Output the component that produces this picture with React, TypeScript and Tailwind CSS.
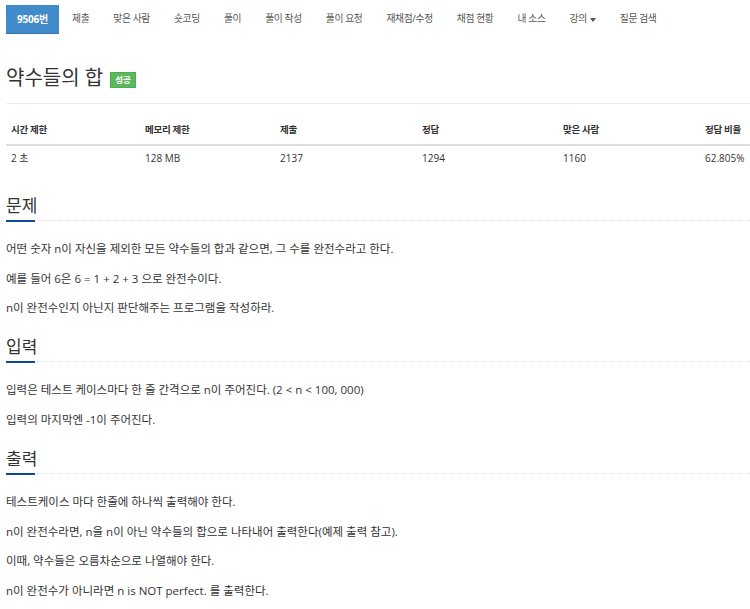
import React from "react";

const navItems = [
  "제출",
  "맞은 사람",
  "숏코딩",
  "풀이",
  "풀이 작성",
  "풀이 요청",
  "재채점/수정",
  "채점 현황",
  "내 소스",
];

function Section({ title, lines }: { title: string; lines: string[] }) {
  return (
    <section className="mt-[18px]">
      <div className="flex items-end">
        <div className="flex flex-col">
          <h2 className="text-[17px] leading-[22px] text-[#333] pb-[3px] whitespace-nowrap">{title}</h2>
          <div className="h-[2px] w-[29px] bg-[#0b4a9a]" />
        </div>
        <div className="flex-1 border-b border-dotted border-[#e3e3e3] mb-[1px]" />
      </div>
      <div className="mt-[17px]">
        {lines.map((l, i) => (
          <p key={i} className="text-[11.5px] leading-[20px] mb-[9.7px] text-[#333] whitespace-nowrap">
            {l}
          </p>
        ))}
      </div>
    </section>
  );
}

export default function App() {
  const cols = ["시간 제한", "메모리 제한", "제출", "정답", "맞은 사람", "정답 비율"];
  const vals = ["2 초", "128 MB", "2137", "1294", "1160", "62.805%"];
  return (
    <div
      className="w-[750px] h-[609px] overflow-hidden bg-white text-[#333]"
      style={{ fontFamily: '"Open Sans", "Noto Sans CJK KR", sans-serif' }}
    >
      <div className="pl-[6px]">
        <nav className="flex items-center gap-[2px] pt-[5px]">
          <div className="h-[29px] px-[11px] flex items-center bg-[#428bca] border-b border-[#3576b3] text-white font-bold text-[10px] tracking-[-0.2px]">
            9506번
          </div>
          {navItems.map((n) => (
            <div key={n} className="h-[29px] px-[11px] flex items-center text-[#555] text-[9.75px] tracking-[-0.35px] whitespace-nowrap">
              {n}
            </div>
          ))}
          <div className="h-[29px] px-[11px] flex items-center text-[#555] text-[9.75px] tracking-[-0.35px] whitespace-nowrap">
            강의
            <span className="ml-[3px] inline-block w-0 h-0 border-l-[3px] border-r-[3px] border-t-[4px] border-l-transparent border-r-transparent border-t-[#555]" />
          </div>
          <div className="h-[29px] px-[11px] flex items-center text-[#555] text-[9.75px] tracking-[-0.35px] whitespace-nowrap">
            질문 검색
          </div>
        </nav>

        <div className="mt-[31px] flex items-center pb-[12px] border-b border-[#eee]">
          <h1 className="text-[20px] leading-[26px] text-[#333]">약수들의 합</h1>
          <span className="ml-[7px] mt-[4px] h-[16px] px-[4px] flex items-center bg-[#5cb85c] border border-[#4cae4c] text-white font-bold text-[8.5px]">
            성공
          </span>
        </div>

        <div className="mt-[13px]">
          <div className="grid grid-cols-[134px_135px_142px_141px_142px_1fr] border-b-2 border-[#ddd]">
            {cols.map((c) => (
              <div key={c} className="px-[5px] h-[27px] flex items-center font-bold text-[9.5px] tracking-[-0.3px] whitespace-nowrap">
                {c}
              </div>
            ))}
          </div>
          <div className="grid grid-cols-[134px_135px_142px_141px_142px_1fr]">
            {vals.map((v) => (
              <div key={v} className="px-[5px] h-[25px] flex items-center text-[10px] whitespace-nowrap">
                {v}
              </div>
            ))}
          </div>
        </div>

        <div className="mt-[24px]">
          <Section
            title="문제"
            lines={[
              "어떤 숫자 n이 자신을 제외한 모든 약수들의 합과 같으면, 그 수를 완전수라고 한다.",
              "예를 들어 6은 6 = 1 + 2 + 3 으로 완전수이다.",
              "n이 완전수인지 아닌지 판단해주는 프로그램을 작성하라.",
            ]}
          />
          <Section
            title="입력"
            lines={[
              "입력은 테스트 케이스마다 한 줄 간격으로 n이 주어진다. (2 < n < 100, 000)",
              "입력의 마지막엔 -1이 주어진다.",
            ]}
          />
          <Section
            title="출력"
            lines={[
              "테스트케이스 마다 한줄에 하나씩 출력해야 한다.",
              "n이 완전수라면, n을 n이 아닌 약수들의 합으로 나타내어 출력한다(예제 출력 참고).",
              "이때, 약수들은 오름차순으로 나열해야 한다.",
              "n이 완전수가 아니라면 n is NOT perfect. 를 출력한다.",
            ]}
          />
        </div>
      </div>
    </div>
  );
}
